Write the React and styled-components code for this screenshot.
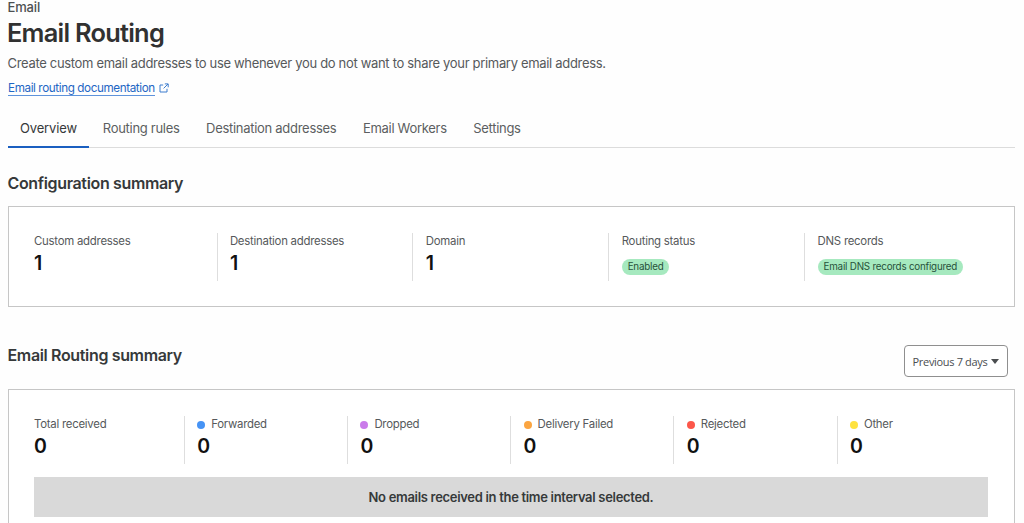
import React from "react";
import styled, { createGlobalStyle } from "styled-components";

const tabs = [
  { label: "Overview", width: "56.5px", active: true },
  { label: "Routing rules", width: "77px" },
  { label: "Destination addresses", width: "130.5px" },
  { label: "Email Workers", width: "84px" },
  { label: "Settings", width: "48px" }
];

const config = [
  { label: "Custom addresses", value: "1" },
  { label: "Destination addresses", value: "1" },
  { label: "Domain", value: "1" },
  { label: "Routing status", badge: "Enabled" },
  { label: "DNS records", badge: "Email DNS records configured" }
];

const totals = [
  { label: "Total received", value: "0" },
  { label: "Forwarded", value: "0", dot: "#4693f5" },
  { label: "Dropped", value: "0", dot: "#ca7bea" },
  { label: "Delivery Failed", value: "0", dot: "#fba541" },
  { label: "Rejected", value: "0", dot: "#fc574a" },
  { label: "Other", value: "0", dot: "#fee23f" }
];

export default function App() {
  return (
    <>
      <GlobalStyle />
      <Page>
        <Crumb>Email</Crumb>
        <Title>Email Routing</Title>
        <Description>
          Create custom email addresses to use whenever you do not want to share your primary email address.
        </Description>
        <DocRow>
          <DocLink href="#">Email routing documentation</DocLink>
          <ExternalIcon viewBox="0 0 10 10">
            <path d="M4.2 2H1v7h7V5.8M5.8.9h3.4v3.4M9 1L4.6 5.4" />
          </ExternalIcon>
        </DocRow>

        <Tabs>
          {tabs.map((tab) => (
            <Tab key={tab.label} $width={tab.width} $active={tab.active}>
              {tab.label}
            </Tab>
          ))}
        </Tabs>

        <ConfigHeading>Configuration summary</ConfigHeading>
        <Card>
          <Stats>
            {config.map((item) => (
              <Stat key={item.label} $width="195.9px">
                <Label>{item.label}</Label>
                {item.badge ? <Badge>{item.badge}</Badge> : <Value>{item.value}</Value>}
              </Stat>
            ))}
          </Stats>
        </Card>

        <SummaryHeader>
          <Heading>Email Routing summary</Heading>
          <RangeButton>
            Previous 7 days
            <Caret viewBox="0 0 8 5">
              <path d="M0 0h8L4 5z" />
            </Caret>
          </RangeButton>
        </SummaryHeader>
        <Card $open>
          <Stats>
            {totals.map((item) => (
              <Stat key={item.label} $width="163.2px">
                <Label>
                  {item.dot && <Dot $color={item.dot} />}
                  {item.label}
                </Label>
                <Value>{item.value}</Value>
              </Stat>
            ))}
          </Stats>
          <Empty>No emails received in the time interval selected.</Empty>
        </Card>
      </Page>
    </>
  );
}

const GlobalStyle = createGlobalStyle`
  * { box-sizing: border-box; }
  body {
    margin: 0;
    background: #fefefe;
    overflow: hidden;
  }
`;

const Page = styled.main`
  height: 523px;
  padding: 0 9px 0 8px;
  overflow: hidden;
  font-family: Inter, "Liberation Sans", sans-serif;
  color: #36393a;
  white-space: nowrap;
`;

const Crumb = styled.div`
  height: 15px;
  margin-left: -0.5px;
  font-size: 13px;
  line-height: 15px;
  font-weight: 500;
  letter-spacing: -0.15px;
  color: #4d5052;
`;

const Title = styled.h1`
  margin: 0 0 0 -1px;
  font-size: 25.4px;
  line-height: 35px;
  font-weight: 600;
  letter-spacing: -0.75px;
  color: #313131;
`;

const Description = styled.p`
  margin: 3px 0 0 -0.5px;
  font-size: 13px;
  line-height: 20px;
  letter-spacing: -0.32px;
  color: #56595b;
`;

const DocRow = styled.div`
  display: flex;
  align-items: flex-start;
  gap: 4px;
  margin-top: 8px;
  height: 16px;
`;

const DocLink = styled.a`
  font-size: 11.7px;
  line-height: 14px;
  height: 15px;
  letter-spacing: -0.4px;
  color: #1f66c4;
  text-decoration: none;
  border-bottom: 1px solid #5f93db;
`;

const ExternalIcon = styled.svg`
  width: 10px;
  height: 10px;
  margin-top: 2px;
  fill: none;
  stroke: #3d7dce;
  stroke-width: 1;
`;

const Tabs = styled.nav`
  display: flex;
  height: 51px;
  border-bottom: 1px solid #dcdcdc;
`;

const Tab = styled.div`
  flex: none;
  height: 51px;
  width: calc(${(p) => p.$width} + 24.8px);
  margin-right: 1.5px;
  padding: 21px 0 0 12px;
  font-size: 13px;
  line-height: 20px;
  letter-spacing: ${(p) => (p.$active ? "-0.15px" : "-0.29px")};
  color: ${(p) => (p.$active ? "#36393a" : "#5c5f61")};
  border-bottom: ${(p) => (p.$active ? "2px solid #1a5fc0" : "none")};
`;

const Heading = styled.h2`
  margin: 0 0 0 -0.5px;
  font-size: 16px;
  line-height: 24px;
  font-weight: 600;
  letter-spacing: -0.35px;
  color: #36393a;
`;

const ConfigHeading = styled(Heading)`
  margin: 23px 0 11px -0.5px;
`;

const SummaryHeader = styled.div`
  display: flex;
  justify-content: space-between;
  height: 82px;
  padding: 36px 7px 0 0;
`;

const Card = styled.section`
  height: ${(p) => (p.$open ? "150px" : "101px")};
  padding: 26px 26px 0 25px;
  background: #fff;
  border: 1px solid #c6c6c6;
`;

const Stats = styled.div`
  display: flex;
`;

const Stat = styled.div`
  flex: none;
  width: calc(${(p) => p.$width} - 12.4px);
  height: 48px;
  margin-right: 12.4px;
  border-right: 1px solid #dedede;

  &:last-child {
    border-right: none;
    margin-right: 0;
  }
`;

const Label = styled.div`
  display: flex;
  align-items: center;
  font-size: 11.4px;
  line-height: 17px;
  letter-spacing: -0.25px;
  color: #56595b;
`;

const Dot = styled.span`
  width: 8px;
  height: 8px;
  margin-right: 6px;
  border-radius: 50%;
  background: ${(p) => p.$color};
`;

const Value = styled.div`
  margin-top: 1px;
  font-size: 19.5px;
  line-height: 24px;
  font-weight: 600;
  color: #111;
`;

const Badge = styled.span`
  display: inline-block;
  height: 16px;
  margin-top: 9px;
  padding: 0 6px;
  border-radius: 8px;
  font-size: 9.8px;
  line-height: 16px;
  letter-spacing: -0.21px;
  vertical-align: top;
  color: #27513a;
  background: #a6e9bf;
`;

const RangeButton = styled.button`
  display: flex;
  align-items: center;
  justify-content: center;
  gap: 4px;
  width: 104px;
  height: 32px;
  margin-top: 2px;
  padding: 0;
  border: 1px solid #8f8f8f;
  border-radius: 4px;
  background: #fff;
  font-family: "Open Sans", "Noto Sans", sans-serif;
  font-size: 11px;
  letter-spacing: -0.33px;
  color: #4a4d4f;
`;

const Caret = styled.svg`
  width: 8px;
  height: 5px;
  fill: #4a4d4f;
`;

const Empty = styled.div`
  height: 40px;
  margin-top: 13px;
  font-size: 13px;
  line-height: 40px;
  font-weight: 600;
  letter-spacing: -0.31px;
  text-align: center;
  color: #36393a;
  background: #d9d9d9;
`;
